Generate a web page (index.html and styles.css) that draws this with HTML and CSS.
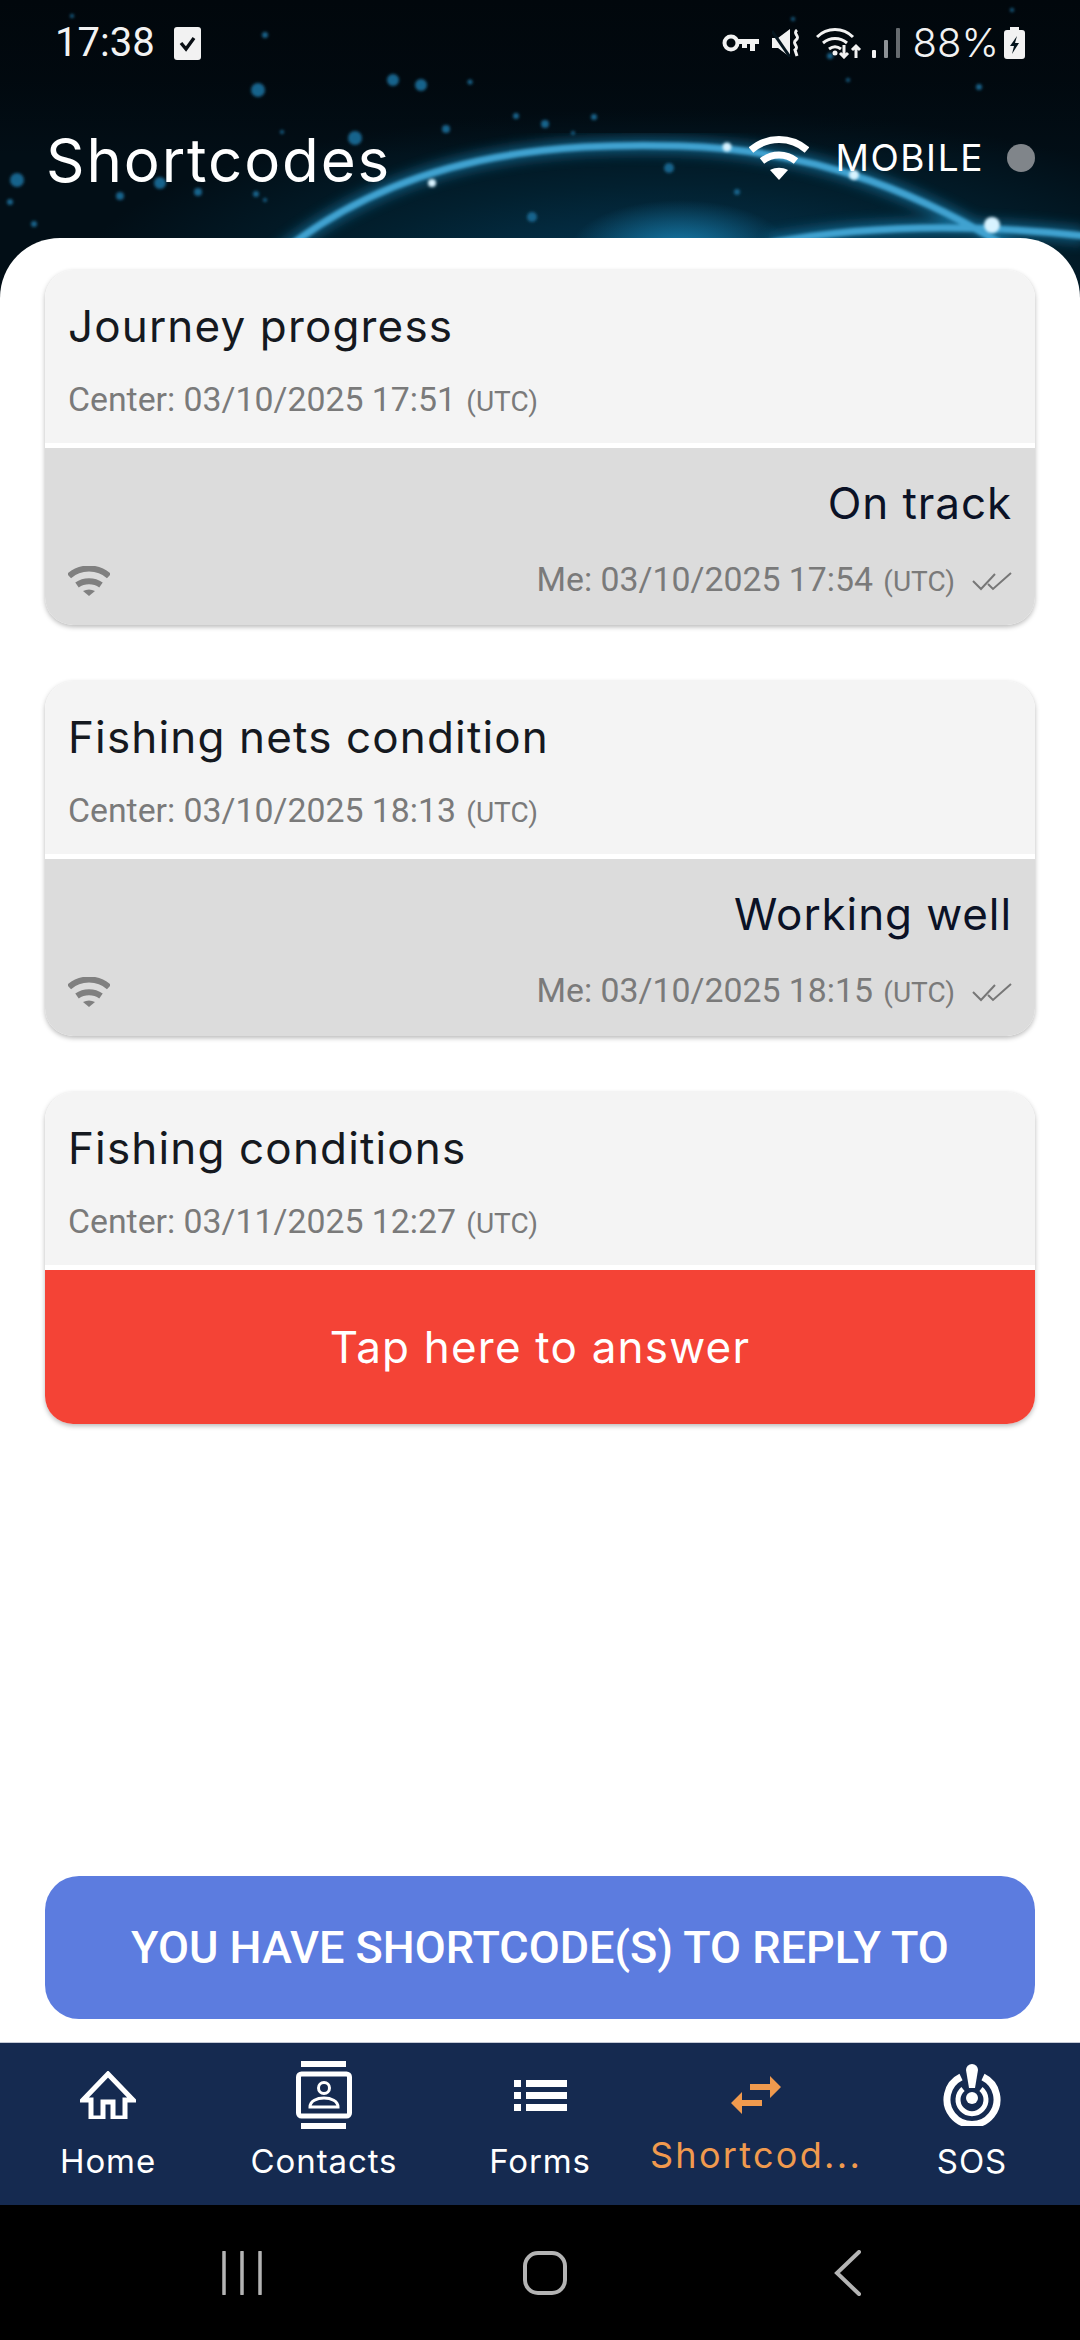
FILE: index.html
```html
<!DOCTYPE html>
<html lang="en">
<head>
<meta charset="utf-8">
<title>Shortcodes</title>
<link rel="stylesheet" href="styles.css">
</head>
<body>
<div class="page">
  <svg class="backdrop" width="1080" height="310" viewBox="0 0 1080 310">
    <defs>
      <radialGradient id="base" cx="62%" cy="90%" r="55%">
        <stop offset="0" stop-color="#053a58"/>
        <stop offset="0.55" stop-color="#02202f"/>
        <stop offset="1" stop-color="#020e16"/>
      </radialGradient>
      <radialGradient id="burst" cx="50%" cy="50%" r="50%">
        <stop offset="0" stop-color="#1a86b8" stop-opacity=".9"/>
        <stop offset="1" stop-color="#1a86b8" stop-opacity="0"/>
      </radialGradient>
      <linearGradient id="fade" x1="0" y1="0" x2="0" y2="1">
        <stop offset="0" stop-color="#01070c" stop-opacity="1"/>
        <stop offset="0.26" stop-color="#01070c" stop-opacity=".7"/>
        <stop offset="0.5" stop-color="#01070c" stop-opacity="0"/>
      </linearGradient>
      <filter id="soft"><feGaussianBlur stdDeviation="7"/></filter>
      <filter id="tiny"><feGaussianBlur stdDeviation="1.4"/></filter>
    </defs>
    <rect width="1080" height="310" fill="url(#base)"/>
    <rect width="1080" height="310" fill="url(#fade)"/>
    <ellipse cx="680" cy="250" rx="110" ry="50" fill="url(#burst)"/>
    <g fill="none" stroke="#1f8fc4" stroke-width="12" filter="url(#soft)" opacity=".7">
      <path d="M270 262C400 150 560 143 680 146C820 150 930 195 1040 268"/>
      <path d="M770 243C860 226 960 222 1085 236"/>
    </g>
    <g fill="none" stroke="#3fa2d0" stroke-width="7" filter="url(#tiny)">
      <path d="M270 262C400 150 560 143 680 146C820 150 930 195 1040 268"/>
      <path d="M770 243C860 226 960 222 1085 236"/>
    </g>
    <g fill="#17648c" filter="url(#tiny)">
      <circle cx="258" cy="90" r="7"/><circle cx="393" cy="80" r="6"/><circle cx="421" cy="85" r="6"/>
      <circle cx="470" cy="82" r="2.5"/><circle cx="265" cy="35" r="3"/><circle cx="72" cy="16" r="2"/>
      <circle cx="793" cy="19" r="2"/><circle cx="1012" cy="10" r="2"/><circle cx="979" cy="87" r="3"/>
      <circle cx="848" cy="80" r="2"/><circle cx="516" cy="116" r="3"/><circle cx="545" cy="124" r="4"/>
      <circle cx="594" cy="117" r="3"/><circle cx="446" cy="129" r="4"/><circle cx="355" cy="138" r="7"/>
      <circle cx="573" cy="133" r="2"/><circle cx="282" cy="132" r="2"/><circle cx="17" cy="180" r="7"/>
      <circle cx="160" cy="183" r="6"/><circle cx="120" cy="196" r="4"/><circle cx="198" cy="192" r="4"/>
      <circle cx="256" cy="194" r="3"/><circle cx="265" cy="200" r="2"/><circle cx="10" cy="202" r="3"/>
      <circle cx="34" cy="224" r="3"/><circle cx="532" cy="217" r="5"/><circle cx="669" cy="168" r="5"/>
      <circle cx="737" cy="192" r="3"/><circle cx="830" cy="56" r="3"/>
    </g>
    <g fill="#d8f3ff" filter="url(#tiny)">
      <circle cx="432" cy="183" r="4"/><circle cx="727" cy="147" r="4.500"/><circle cx="854" cy="175" r="5"/>
      <circle cx="992" cy="225" r="8"/>
    </g>
  </svg>

  <header class="top">
    <div class="status">
      <div class="status-group">
        <span class="clock">17:38</span>
        <svg width="27" height="33" viewBox="0 0 27 33"><rect width="27" height="33" rx="3" fill="#f2f2f2"/><path d="M7 16l5 6 8-11" fill="none" stroke="#0a0f14" stroke-width="3.4"/></svg>
      </div>
      <div class="status-group status-right">
        <svg width="37" height="18" viewBox="0 0 37 18"><circle cx="9" cy="9" r="6.500" fill="none" stroke="#f2f2f2" stroke-width="4"/><path d="M14 5h23v5h-4v7h-5v-7h-3v4h-5v-4h-6z" fill="#f2f2f2"/></svg>
        <svg class="gap-mute" width="29" height="28" viewBox="0 0 29 28"><path d="M0 9h6L18 0v28L6 19H0z" fill="#f2f2f2"/><path d="M0 2l18 26" stroke="#04141d" stroke-width="3"/><path d="M25 1c-5 4 4 6-1 10s4 6-1 10l2 6" fill="none" stroke="#f2f2f2" stroke-width="3"/></svg>
        <svg class="gap-wifi" width="46" height="32" viewBox="0 0 46 32"><g fill="none" stroke="#f2f2f2" stroke-width="3"><path d="M1 10C11 0 27 0 37 10"/><path d="M7 16c7-6 17-6 24 0"/><path d="M13 22c4-3 8-3 12 0"/><path d="M28 18v12M24 26l4 4 4-4M40 31V19M36 23l4-4 4 4"/></g><circle cx="19" cy="26" r="2.500" fill="#f2f2f2"/></svg>
        <svg class="gap-signal" width="28" height="30" viewBox="0 0 28 30"><rect x="0" y="22" width="4" height="8" rx="1" fill="#f2f2f2"/><rect x="12" y="12" width="4" height="18" rx="1" fill="#8d9296"/><rect x="24" y="0" width="4" height="30" rx="1" fill="#666b6f"/></svg>
        <span class="battery-level">88%</span>
        <svg class="gap-battery" width="21" height="32" viewBox="0 0 21 32"><path d="M6 0h9v3h3a3 3 0 0 1 3 3v23a3 3 0 0 1-3 3H3a3 3 0 0 1-3-3V6a3 3 0 0 1 3-3h3z" fill="#f2f2f2"/><path d="M13 9l-7 10h4l-2 8 7-11h-4z" fill="#04141d"/></svg>
      </div>
    </div>
    <div class="appbar">
      <h1 class="title">Shortcodes</h1>
      <div class="network">
        <svg width="60" height="44" viewBox="0 0 60 44"><g fill="none" stroke="#fff" stroke-width="7"><path d="M2 14C18 0 42 0 58 14"/><path d="M13 25c10-8 24-8 34 0"/></g><path d="M21 34c6-3 12-3 18 0l-9 10z" fill="#fff"/></svg>
        <span class="network-name">MOBILE</span>
        <span class="network-dot"></span>
      </div>
    </div>
  </header>

  <main class="sheet">
    <div class="cards">
      <article class="card">
        <div class="prompt">
          <div class="prompt-title">Journey progress</div>
          <div class="stamp">Center: 03/10/2025 17:51 <small>(UTC)</small></div>
        </div>
        <div class="reply">
          <div class="reply-text">On track</div>
          <div class="reply-meta">
            <svg width="42" height="30" viewBox="0 0 42 30"><g fill="none" stroke="#808080" stroke-width="6"><path d="M1 10C12 0 30 0 41 10"/><path d="M9 19c7-5 17-5 24 0"/></g><path d="M15 25c4-2 8-2 12 0l-6 5z" fill="#808080"/></svg>
            <div class="stamp-row">
              <span class="stamp">Me: 03/10/2025 17:54 <small>(UTC)</small></span>
              <svg width="40" height="20" viewBox="0 0 40 20"><path d="M1 10l8 8L23 3M16 13l5 5L39 2" fill="none" stroke="#777" stroke-width="2"/></svg>
            </div>
          </div>
        </div>
      </article>

      <article class="card">
        <div class="prompt">
          <div class="prompt-title">Fishing nets condition</div>
          <div class="stamp">Center: 03/10/2025 18:13 <small>(UTC)</small></div>
        </div>
        <div class="reply">
          <div class="reply-text">Working well</div>
          <div class="reply-meta">
            <svg width="42" height="30" viewBox="0 0 42 30"><g fill="none" stroke="#808080" stroke-width="6"><path d="M1 10C12 0 30 0 41 10"/><path d="M9 19c7-5 17-5 24 0"/></g><path d="M15 25c4-2 8-2 12 0l-6 5z" fill="#808080"/></svg>
            <div class="stamp-row">
              <span class="stamp">Me: 03/10/2025 18:15 <small>(UTC)</small></span>
              <svg width="40" height="20" viewBox="0 0 40 20"><path d="M1 10l8 8L23 3M16 13l5 5L39 2" fill="none" stroke="#777" stroke-width="2"/></svg>
            </div>
          </div>
        </div>
      </article>

      <article class="card">
        <div class="prompt">
          <div class="prompt-title">Fishing conditions</div>
          <div class="stamp">Center: 03/11/2025 12:27 <small>(UTC)</small></div>
        </div>
        <div class="answer">Tap here to answer</div>
      </article>
    </div>
    <div class="notice">YOU HAVE SHORTCODE(S) TO REPLY TO</div>
  </main>

  <nav class="tabs">
    <div class="tab">
      <div class="tab-icon"><svg width="56" height="48" viewBox="0 0 56 48"><path d="M28 3L3 29h8v18h12V31h10v16h12V29h8z" fill="none" stroke="#fff" stroke-width="5"/></svg></div>
      <span class="tab-label">Home</span>
    </div>
    <div class="tab">
      <div class="tab-icon"><svg width="56" height="68" viewBox="0 0 56 68"><path d="M5 0h45v6H5zM5 62h45v6H5z" fill="#fff"/><rect x="2.500" y="13" width="51" height="42" rx="3" fill="none" stroke="#fff" stroke-width="5"/><circle cx="28" cy="27" r="5.500" fill="none" stroke="#fff" stroke-width="3"/><path d="M14 46c0-12 28-12 28 0z" fill="none" stroke="#fff" stroke-width="3"/></svg></div>
      <span class="tab-label">Contacts</span>
    </div>
    <div class="tab">
      <div class="tab-icon"><svg width="53" height="31" viewBox="0 0 53 31"><path d="M0 0h7v7H0zM12 0h41v7H12zM0 12h7v7H0zM12 12h41v7H12zM0 24h7v7H0zM12 24h41v7H12z" fill="#fff"/></svg></div>
      <span class="tab-label">Forms</span>
    </div>
    <div class="tab tab-active">
      <div class="tab-icon"><svg width="50" height="38" viewBox="0 0 50 38"><path d="M19 8h20V0l11 11-11 11v-8H19zM31 24H11v-8L0 27l11 11v-8h20z" fill="#f09a4e"/></svg></div>
      <span class="tab-label">Shortcod...</span>
    </div>
    <div class="tab">
      <div class="tab-icon"><svg width="58" height="62" viewBox="0 0 58 62"><g fill="none" stroke="#fff"><path d="M18 13A25 25 0 1 0 40 13" stroke-width="7"/><path d="M20 25A14 14 0 1 0 38 25" stroke-width="5"/></g><circle cx="29" cy="34" r="6" fill="#fff"/><path d="M23 6a6 6 0 0 1 12 0l-3 18h-6z" fill="#fff"/></svg></div>
      <span class="tab-label">SOS</span>
    </div>
  </nav>

  <div class="sysnav">
    <svg width="40" height="44" viewBox="0 0 40 44"><path d="M2 1v42M20 1v42M38 1v42" stroke="#b4b4b4" stroke-width="3.500" stroke-linecap="round"/></svg>
    <svg width="44" height="44" viewBox="0 0 44 44"><rect x="2" y="2" width="40" height="40" rx="13" fill="none" stroke="#b4b4b4" stroke-width="4"/></svg>
    <svg width="28" height="46" viewBox="0 0 28 46"><path d="M25 2L3 23l22 21" fill="none" stroke="#b4b4b4" stroke-width="4" stroke-linecap="round"/></svg>
  </div>
</div>
</body>
</html>
```

FILE: styles.css
```css
* { box-sizing: border-box; }
html, body { margin: 0; padding: 0; }
body { font-family: "Inter", "Liberation Sans", sans-serif; background: #000; }

.page {
  position: relative;
  width: 1080px;
  height: 2340px;
  display: flex;
  flex-direction: column;
  overflow: hidden;
}
.backdrop { position: absolute; left: 0; top: 0; }

.top { position: relative; height: 238px; color: #fff; flex: none; }
.status {
  height: 86px;
  padding: 0 55px;
  display: flex;
  align-items: center;
  justify-content: space-between;
  font-family: "Roboto", sans-serif;
  font-size: 40px;
  color: #f2f2f2;
}
.status-group { display: flex; align-items: center; gap: 19px; }
.status-right { gap: 0; }
.clock, .battery-level { line-height: 44px; }
.battery-level { font-family: "Inter", sans-serif; font-weight: 300; font-size: 40px; margin-left: 13px; }
.gap-mute { margin-left: 13px; }
.gap-wifi { margin-left: 15px; }
.gap-signal { margin-left: 10px; }
.gap-battery { margin-left: 5px; }

.appbar {
  height: 72px;
  margin-top: 38px;
  padding: 0 45px 0 46px;
  display: flex;
  align-items: center;
  justify-content: space-between;
}
.title { margin: 0; font-size: 60px; font-weight: 400; letter-spacing: 1.9px; line-height: 72px; }
.network { display: flex; align-items: center; margin-top: -5px; }
.network-name { margin-left: 26px; font-size: 37px; letter-spacing: 1.6px; }
.network-dot { margin-left: 23px; width: 28px; height: 28px; border-radius: 50%; background: #80858a; }

.sheet {
  position: relative;
  flex: 1;
  background: #fff;
  border-radius: 60px 60px 0 0;
  padding: 32px 45px 23px;
  display: flex;
  flex-direction: column;
  justify-content: space-between;
}
.cards { display: flex; flex-direction: column; gap: 56px; }
.card {
  border-radius: 28px;
  overflow: hidden;
  background: #fff;
  box-shadow: 0 2px 5px rgba(0, 0, 0, .28);
}
.prompt { height: 178px; background: #f4f4f4; border-bottom: 5px solid #fff; padding: 16px 23px 0; }
.prompt-title { font-size: 44px; line-height: 80px; letter-spacing: 1.15px; color: #15191f; }
.stamp { font-family: "Roboto", sans-serif; font-size: 33.8px; line-height: 50px; color: #7a7a7a; white-space: nowrap; }
.stamp small { font-size: 28px; margin-left: 2px; }
.prompt .stamp { margin-top: 9px; }

.reply { height: 177px; background: #dcdcdc; padding: 19px 23px 0; }
.reply-text { text-align: right; font-size: 44px; line-height: 72px; letter-spacing: 0.9px; color: #0b1226; }
.reply-meta { display: flex; align-items: center; justify-content: space-between; margin-top: 16px; }
.stamp-row { display: flex; align-items: center; gap: 17px; }

.answer {
  height: 154px;
  background: #f44336;
  color: #fff;
  font-size: 44px;
  letter-spacing: 1.2px;
  display: flex;
  align-items: center;
  justify-content: center;
}

.notice {
  height: 143px;
  border-radius: 34px;
  background: #5c7cdf;
  color: #fff;
  font-family: "Roboto", sans-serif;
  font-size: 45px;
  font-weight: 500;
  display: flex;
  align-items: center;
  justify-content: center;
}

.tabs {
  flex: none;
  height: 163px;
  background: #152a50;
  border-top: 1px solid #c5cad6;
  display: grid;
  grid-template-columns: repeat(5, 1fr);
  padding-top: 15px;
}
.tab { display: flex; flex-direction: column; align-items: center; color: #fff; }
.tab-icon { height: 74px; display: flex; align-items: center; justify-content: center; }
.tab-label { font-size: 33px; line-height: 44px; letter-spacing: 0.9px; margin-top: 7px; white-space: nowrap; }
.tab-active { color: #f09a4e; }
.tab-active .tab-label { font-size: 36px; letter-spacing: 2.3px; margin-top: 1px; }

.sysnav {
  flex: none;
  height: 135px;
  background: #000;
  display: grid;
  grid-template-columns: 1fr 1fr 1fr;
  justify-items: center;
  align-items: center;
  padding: 0 81px 0 90px;
}
```
